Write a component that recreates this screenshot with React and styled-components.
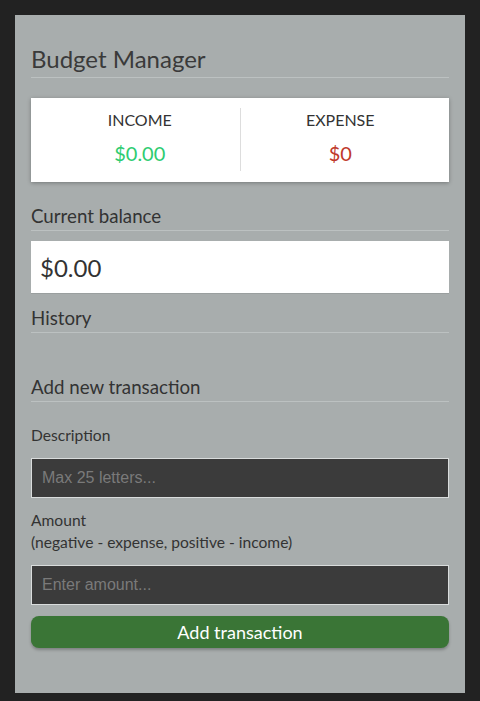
import React from "react"
import styled, { createGlobalStyle } from "styled-components"

const GlobalStyle = createGlobalStyle`
  html, body {
    margin: 0;
    padding: 0;
    background-color: #222222;
  }
  body {
    font-family: 'Lato', 'Noto Sans', sans-serif;
    color: #333;
  }
  * {
    box-sizing: border-box;
  }
`

const Container = styled.div`
  width: 450px;
  margin: 15px auto 0;
  padding: 29px 16px 45px;
  background-color: #a8adad;
`

const Title = styled.h2`
  margin: 0 0 20px;
  padding-bottom: 4px;
  font-size: 24px;
  font-weight: 400;
  line-height: 29px;
  color: #3a3a3a;
  border-bottom: 1px solid #bcc1c1;
`

const Summary = styled.div`
  display: flex;
  padding: 10px 9px 11px;
  background-color: #fff;
  box-shadow: 0 1px 4px rgba(0, 0, 0, 0.3);
`

const SummaryColumn = styled.div`
  flex: 1;
  padding: 2px 0 6px;
  text-align: center;

  & + & {
    border-left: 1px solid #dddddd;
  }
`

const SummaryLabel = styled.h4`
  margin: 0 0 12px;
  font-size: 16px;
  font-weight: 400;
  line-height: 19px;
  text-transform: uppercase;
  color: #333;
`

const Money = styled.p`
  margin: 0;
  font-size: 20px;
  line-height: 24px;
  color: ${(p) => (p.$type === "plus" ? "#2ecc71" : "#c0392b")};
`

const SectionTitle = styled.h3`
  margin: ${(p) => p.$top}px 0 0;
  padding-bottom: 3px;
  font-size: 18.72px;
  font-weight: 400;
  line-height: 22px;
  color: #333;
  border-bottom: 1px solid #bcc1c1;
`

const Balance = styled.div`
  display: flex;
  align-items: center;
  height: 52px;
  margin-top: 10px;
  padding: 0 9px;
  background-color: #fff;
  font-size: 24px;
  color: #333;
  box-shadow: 0 1px 0 rgba(0, 0, 0, 0.08);
`

const HistoryList = styled.ul`
  margin: 0;
  padding: 0;
  list-style: none;
  height: 43px;
`

const Form = styled.form`
  margin-top: 22px;
`

const Label = styled.label`
  display: block;
  margin-bottom: 11px;
  font-size: 15.6px;
  line-height: 22.5px;
  color: #333;
`

const Input = styled.input`
  display: block;
  width: 100%;
  height: 40px;
  margin: 0 0 11px;
  padding: 0 10px;
  background-color: #3b3b3b;
  border: 1px solid #d9dcdc;
  color: #eee;
  font-family: 'Liberation Sans', Arial, sans-serif;
  font-size: 16px;
  outline: none;

  &::placeholder {
    color: #7a7a7a;
  }
`

const Button = styled.button`
  display: block;
  width: 100%;
  height: 32px;
  margin-top: 10px;
  border: none;
  border-radius: 8px;
  background-color: #3a7536;
  color: #fff;
  font-family: 'Lato', sans-serif;
  font-size: 18px;
  box-shadow: 0 2px 3px rgba(0, 0, 0, 0.25);
  cursor: pointer;
`

export default function App() {
  return (
    <>
      <GlobalStyle />
      <Container>
        <Title>Budget Manager</Title>
        <Summary>
          <SummaryColumn>
            <SummaryLabel>Income</SummaryLabel>
            <Money $type="plus">$0.00</Money>
          </SummaryColumn>
          <SummaryColumn>
            <SummaryLabel>Expense</SummaryLabel>
            <Money $type="minus">$0</Money>
          </SummaryColumn>
        </Summary>
        <SectionTitle $top={23}>Current balance</SectionTitle>
        <Balance>$0.00</Balance>
        <SectionTitle $top={14}>History</SectionTitle>
        <HistoryList />
        <SectionTitle $top={0}>Add new transaction</SectionTitle>
        <Form onSubmit={(e) => e.preventDefault()}>
          <Label htmlFor="text">Description</Label>
          <Input id="text" type="text" placeholder="Max 25 letters..." />
          <Label htmlFor="amount">
            Amount <br />
            (negative - expense, positive - income)
          </Label>
          <Input id="amount" type="number" placeholder="Enter amount..." />
          <Button type="submit">Add transaction</Button>
        </Form>
      </Container>
    </>
  )
}
